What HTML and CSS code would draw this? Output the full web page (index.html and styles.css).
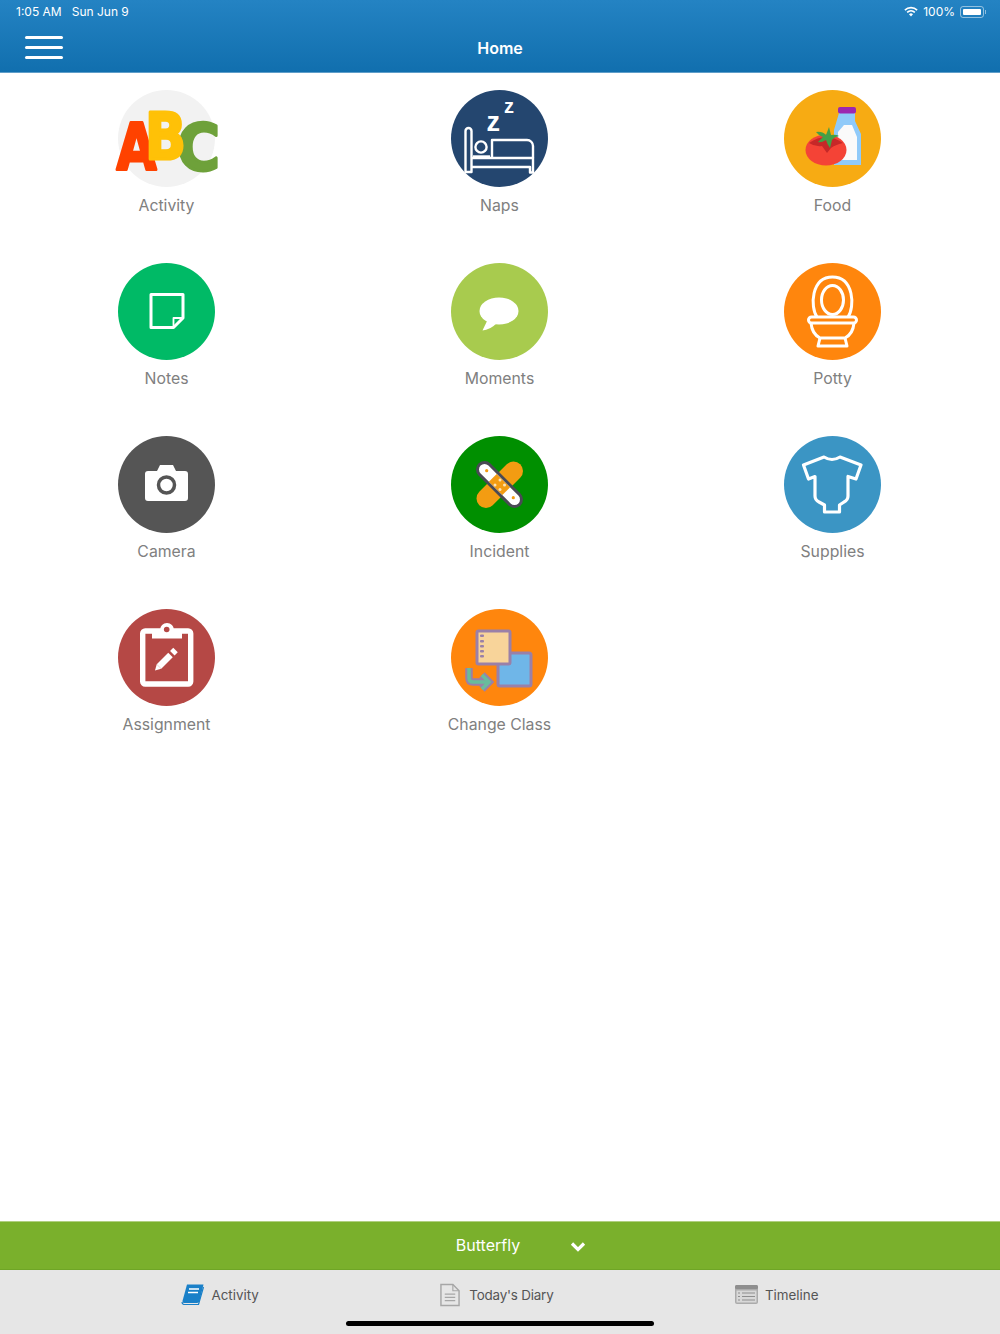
FILE: index.html
```html
<!DOCTYPE html>
<html lang="en">
<head>
    <meta charset="UTF-8">
    <meta name="viewport" content="width=device-width, initial-scale=1.0">
    <title>Home</title>
    <link rel="stylesheet" href="styles.css">
</head>
<body>
    <div class="page">
        <header class="app-header">
            <div class="status-bar">
                <span class="status-time">1:05 AM</span>
                <span class="status-date">Sun Jun 9</span>
                <div class="status-right">
                    <svg class="wifi" viewBox="0 0 16 12" width="14" height="11">
                        <path d="M1 4.4 A10 10 0 0 1 15 4.4" fill="none" stroke="#fff" stroke-width="1.8"/>
                        <path d="M3.6 7 A6.4 6.4 0 0 1 12.4 7" fill="none" stroke="#fff" stroke-width="1.8"/>
                        <path d="M8 11.6 L5.7 9.2 A3.2 3.2 0 0 1 10.3 9.2 Z" fill="#fff"/>
                    </svg>
                    <span class="status-level">100%</span>
                    <div class="battery"><div class="battery-fill"></div></div>
                    <div class="battery-nub"></div>
                </div>
            </div>
            <div class="nav-bar">
                <button class="menu-btn" aria-label="Menu"><span></span><span></span><span></span></button>
                <h1>Home</h1>
            </div>
        </header>

        <main class="menu-grid">
            <div class="menu-item">
                <svg class="icon" viewBox="0 0 97 97">
                    <circle cx="48.5" cy="48.5" r="48.5" fill="#f2f2f2"/>
                    <text class="abc" x="-1.500" y="79.500" textLength="40" lengthAdjust="spacingAndGlyphs" fill="#ff4200" stroke="#ff4200">A</text>
                    <text class="abc" x="59" y="80" textLength="43" lengthAdjust="spacingAndGlyphs" fill="#6ea13a" stroke="#6ea13a">C</text>
                    <text class="abc" x="27" y="68.500" textLength="41" lengthAdjust="spacingAndGlyphs" fill="#ffc107" stroke="#ffc107">B</text>
                </svg>
                <span class="menu-label">Activity</span>
            </div>
            <div class="menu-item">
                <svg class="icon" viewBox="0 0 97 97">
                    <circle cx="48.5" cy="48.5" r="48.5" fill="#24466f"/>
                    <g fill="none" stroke="#fff" stroke-width="2.4" stroke-linejoin="round">
                        <path d="M14.5 82 V41 A3 3 0 0 1 20.5 41 V82 Z"/>
                        <path d="M20.5 68 H82 V82.5 H79 V77 H20.5"/>
                        <path d="M41 68 V50 H76 A6 6 0 0 1 82 56 V68"/>
                        <circle cx="30" cy="57" r="5.6"/>
                        <path d="M22 66.500 H39"/>
                    </g>
                    <text class="zzz zzz-big" x="35.500" y="41">z</text>
                    <text class="zzz zzz-small" x="53" y="23">z</text>
                </svg>
                <span class="menu-label">Naps</span>
            </div>
            <div class="menu-item">
                <svg class="icon" viewBox="0 0 97 97">
                    <circle cx="48.5" cy="48.5" r="48.5" fill="#f7ab13"/>
                    <path d="M55 23 H71 V31 L77 44 V75 H50 V40 Z" fill="#90caf9"/>
                    <path d="M60 35 H68 L73 47 V70 H54 V42 Z" fill="#fafafa"/>
                    <rect x="54" y="17" width="18" height="6.500" rx="2" fill="#9c27b0"/>
                    <ellipse cx="42" cy="60" rx="20.500" ry="15.500" fill="#f44336"/>
                    <path d="M25 53 Q42 41 59 53 Q51 55 47 58 L43 63 L38 56 Q31 57 25 53 Z" fill="#c62828"/>
                    <path d="M32 42 Q38 41 42 45 L45 37 L47 45 Q52 44 55 46 Q50 47 48 50 L46 58 Q43 54 42 50 Q37 53 34 52 Q37 49 39 47 Q35 46 32 42 Z" fill="#43a047"/>
                </svg>
                <span class="menu-label">Food</span>
            </div>

            <div class="menu-item">
                <svg class="icon" viewBox="0 0 97 97">
                    <circle cx="48.5" cy="48.5" r="48.5" fill="#00ba66"/>
                    <path d="M33 31.500 H65 V55 L55.500 64.500 H33 Z" fill="none" stroke="#fff" stroke-width="3" stroke-linejoin="round"/>
                    <path d="M65 55 H55.500 V64.500" fill="none" stroke="#fff" stroke-width="1.8" stroke-linejoin="round"/>
                </svg>
                <span class="menu-label">Notes</span>
            </div>
            <div class="menu-item">
                <svg class="icon" viewBox="0 0 97 97">
                    <circle cx="48.5" cy="48.5" r="48.5" fill="#a8cb4e"/>
                    <ellipse cx="48" cy="48" rx="19.500" ry="13.500" fill="#fff"/>
                    <path d="M37 56 L31.500 67.500 Q39 67 46 60 Z" fill="#fff"/>
                </svg>
                <span class="menu-label">Moments</span>
            </div>
            <div class="menu-item">
                <svg class="icon" viewBox="0 0 97 97">
                    <circle cx="48.5" cy="48.5" r="48.5" fill="#ff860d"/>
                    <g fill="none" stroke="#fff" stroke-width="3" stroke-linejoin="round">
                        <path d="M33 54 C26 44 27 14 48.500 14 C70 14 71 44 64 54"/>
                        <ellipse cx="48.500" cy="37" rx="11" ry="14.500"/>
                        <rect x="24.500" y="54" width="48" height="6" rx="3"/>
                        <path d="M27 60 Q28 71 36 75 H61 Q69 71 70 60"/>
                        <path d="M36 75 L34 83 H63 L61 75"/>
                    </g>
                </svg>
                <span class="menu-label">Potty</span>
            </div>

            <div class="menu-item">
                <svg class="icon" viewBox="0 0 97 97">
                    <circle cx="48.5" cy="48.5" r="48.5" fill="#555"/>
                    <path d="M30 35 H39 L42 29 H55 L58 35 H67 A3 3 0 0 1 70 38 V62 A3 3 0 0 1 67 65 H30 A3 3 0 0 1 27 62 V38 A3 3 0 0 1 30 35 Z" fill="#fff"/>
                    <circle cx="48.500" cy="49" r="8" fill="none" stroke="#555" stroke-width="3.500"/>
                </svg>
                <span class="menu-label">Camera</span>
            </div>
            <div class="menu-item">
                <svg class="icon" viewBox="0 0 97 97">
                    <circle cx="48.5" cy="48.5" r="48.5" fill="#008f00"/>
                    <line x1="35" y1="62.500" x2="62.500" y2="35" stroke="#f39c12" stroke-width="19" stroke-linecap="round"/>
                    <line x1="33.500" y1="33.500" x2="63.500" y2="63.500" stroke="#4a4a55" stroke-width="17" stroke-linecap="round"/>
                    <line x1="33.500" y1="33.500" x2="63.500" y2="63.500" stroke="#fff" stroke-width="11" stroke-linecap="round"/>
                    <rect x="43" y="39" width="11" height="19" transform="rotate(-45 48.500 48.500)" fill="#f39c12"/>
                    <g fill="#fde3b5">
                        <circle cx="44" cy="49" r="1.500"/><circle cx="49" cy="44" r="1.500"/>
                        <circle cx="53.500" cy="49" r="1.500"/><circle cx="49" cy="53.500" r="1.500"/>
                    </g>
                    <circle cx="35.700" cy="34.700" r="1.600" fill="#f39c12"/>
                    <circle cx="62.300" cy="61.700" r="1.600" fill="#f39c12"/>
                </svg>
                <span class="menu-label">Incident</span>
            </div>
            <div class="menu-item">
                <svg class="icon" viewBox="0 0 97 97">
                    <circle cx="48.5" cy="48.5" r="48.5" fill="#3b95c4"/>
                    <path d="M19.500 29 L40 21 Q48 26 56 21 L77 29 L72 43 L64 40.500 V60 Q64 64 60 66 L55.500 69 V76 H40.500 V69 L35 66 Q31 64 31 60 V40.500 L24.500 43 Z" fill="none" stroke="#fff" stroke-width="3.200" stroke-linejoin="round"/>
                </svg>
                <span class="menu-label">Supplies</span>
            </div>

            <div class="menu-item">
                <svg class="icon" viewBox="0 0 97 97">
                    <circle cx="48.5" cy="48.5" r="48.5" fill="#b54845"/>
                    <rect x="24.700" y="22" width="48" height="53" rx="2.500" fill="none" stroke="#fff" stroke-width="5.400"/>
                    <path d="M34 21 H42 A7 7 0 0 1 56 21 H64 V29.500 H34 Z" fill="#fff"/>
                    <circle cx="48.700" cy="20.500" r="2.800" fill="#b54845"/>
                    <path d="M37 61.500 L38.700 55.300 L43.200 59.800 Z" fill="#fff"/>
                    <line x1="41" y1="57.500" x2="52.500" y2="46" stroke="#fff" stroke-width="6.400"/>
                    <line x1="54.300" y1="44.200" x2="57.500" y2="41" stroke="#fff" stroke-width="6.400"/>
                </svg>
                <span class="menu-label">Assignment</span>
            </div>
            <div class="menu-item">
                <svg class="icon" viewBox="0 0 97 97">
                    <circle cx="48.5" cy="48.5" r="48.5" fill="#ff860d"/>
                    <rect x="47" y="44" width="33" height="33" rx="2" fill="#6fb6e8" stroke="#9a80a8" stroke-width="3"/>
                    <rect x="26" y="22" width="33" height="33" rx="1.500" fill="#f8d49a" stroke="#9a80a8" stroke-width="3"/>
                    <g fill="#9a80a8">
                        <rect x="29" y="25.500" width="4" height="2.500" rx="1"/><rect x="29" y="31" width="4" height="2.500" rx="1"/>
                        <rect x="29" y="36" width="4" height="2.500" rx="1"/><rect x="29" y="41" width="4" height="2.500" rx="1"/>
                        <rect x="29" y="46" width="4" height="2.500" rx="1"/>
                    </g>
                    <path d="M18 59 V69 Q18 73 22 73 H36 M31 66 L38 73 L31 80" fill="none" stroke="#9a80a8" stroke-width="7.500"/>
                    <path d="M18 59 V69 Q18 73 22 73 H36 M31 66 L38 73 L31 80" fill="none" stroke="#69bc9c" stroke-width="3.500"/>
                </svg>
                <span class="menu-label">Change Class</span>
            </div>
        </main>

        <div class="class-bar">
            <span>Butterfly</span>
            <svg class="chevron" viewBox="0 0 16 11" width="16" height="11">
                <path d="M2 2.500 L8 8.500 L14 2.500" fill="none" stroke="#fff" stroke-width="3.200"/>
            </svg>
        </div>

        <nav class="tab-bar">
            <div class="tab">
                <svg viewBox="0 0 23 21" width="23" height="21">
                    <path d="M6 0.500 H22.500 L18.500 17 Q18 19 16 19 H3 Q1 19 1.500 17 Z" fill="#1a80c8"/>
                    <path d="M1 18 Q1 20.500 3.500 20.500 H17.500 L22.500 3" fill="none" stroke="#1a80c8" stroke-width="1.200"/>
                    <path d="M8 5 H18 M7 8.500 H17" stroke="#fff" stroke-width="1.300"/>
                </svg>
                <span>Activity</span>
            </div>
            <div class="tab">
                <svg viewBox="0 0 21 24" width="20" height="24">
                    <path d="M1 1 H13.500 L20 7.500 V23 H1 Z" fill="none" stroke="#a6a6a6" stroke-width="1.500"/>
                    <path d="M13.500 1 V7.500 H20" fill="none" stroke="#a6a6a6" stroke-width="1.200"/>
                    <path d="M5 11 H16 M5 14.500 H16 M5 18 H16" stroke="#a6a6a6" stroke-width="1.300"/>
                </svg>
                <span class="tab-tight">Today's Diary</span>
            </div>
            <div class="tab">
                <svg viewBox="0 0 23 19" width="23" height="19">
                    <rect x="0" y="0" width="23" height="19" rx="2" fill="#ababab"/>
                    <rect x="0" y="0" width="23" height="4" rx="1.500" fill="#8e8e8e"/>
                    <rect x="1.500" y="5.500" width="20" height="12" fill="#d8d8d8"/>
                    <path d="M3 8 H5 M7 8 H20 M3 11.500 H5 M7 11.500 H20 M3 15 H5 M7 15 H20" stroke="#8e8e8e" stroke-width="1.200"/>
                </svg>
                <span>Timeline</span>
            </div>
            <div class="home-indicator"></div>
        </nav>
    </div>
</body>
</html>
```

FILE: styles.css
```css
* {
    box-sizing: border-box;
}

body {
    margin: 0;
    font-family: Inter, 'Liberation Sans', sans-serif;
    background: white;
}

.page {
    height: 1334px;
    display: flex;
    flex-direction: column;
}

.app-header {
    height: 73px;
    background: linear-gradient(#2483c3, #116fae);
    border-bottom: 1px solid #5f9ec9;
    color: white;
}

.status-bar {
    height: 23px;
    padding: 0 14px 0 16px;
    display: flex;
    align-items: center;
    font-size: 12px;
}

.status-date {
    margin-left: 10px;
}

.status-right {
    margin-left: auto;
    display: flex;
    align-items: center;
}

.wifi {
    margin-right: 5px;
}

.battery {
    width: 24px;
    height: 12px;
    margin-left: 5px;
    padding: 2px;
    border: 1px solid rgba(255, 255, 255, 0.5);
    border-radius: 3px;
}

.battery-fill {
    height: 100%;
    background: white;
    border-radius: 1px;
}

.battery-nub {
    width: 1px;
    height: 4px;
    margin-left: 1px;
    background: rgba(255, 255, 255, 0.5);
}

.nav-bar {
    height: 49px;
    position: relative;
    display: flex;
    align-items: center;
    justify-content: center;
}

.nav-bar h1 {
    margin: 0;
    font-size: 16px;
    font-weight: 600;
}

.menu-btn {
    position: absolute;
    left: 25px;
    top: 13px;
    width: 38px;
    padding: 0;
    background: none;
    border: none;
    display: flex;
    flex-direction: column;
    gap: 7.5px;
}

.menu-btn span {
    height: 2.5px;
    background: white;
    border-radius: 2px;
}

.menu-grid {
    flex: 1;
    padding-top: 17px;
    display: grid;
    grid-template-columns: repeat(3, 333px);
    grid-auto-rows: 173px;
    align-content: start;
}

.menu-item {
    display: flex;
    flex-direction: column;
    align-items: center;
}

.icon {
    width: 97px;
    height: 97px;
    overflow: visible;
}

.menu-label {
    margin-top: 9px;
    font-size: 15.8px;
    line-height: 20px;
    color: #808080;
}

/* letters on the Activity tile */
.abc {
    font-family: 'DejaVu Sans', sans-serif;
    font-weight: 700;
    font-size: 64px;
    stroke-width: 3px;
    stroke-linejoin: round;
}

.zzz {
    font-family: 'Liberation Sans', sans-serif;
    font-weight: 700;
    fill: white;
}

.zzz-big {
    font-size: 27px;
}

.zzz-small {
    font-size: 20px;
}

.class-bar {
    height: 49px;
    padding: 0 0 2px 42px;
    background: #7ab02c;
    border-top: 1px solid #b0cf80;
    border-bottom: 1px solid #6fa526;
    display: flex;
    align-items: center;
    justify-content: center;
    gap: 50px;
    color: white;
    font-size: 16px;
}

.chevron {
    margin-top: 4px;
}

.tab-bar {
    height: 64px;
    padding-bottom: 15px;
    position: relative;
    background: #e6e6e6;
    display: flex;
    align-items: center;
    justify-content: space-evenly;
}

.tab {
    display: flex;
    align-items: center;
    gap: 7px;
    font-size: 13.4px;
    color: #555;
}

.tab-tight {
    margin-left: 2px;
    letter-spacing: -0.2px;
}

.home-indicator {
    position: absolute;
    left: 346px;
    bottom: 8px;
    width: 308px;
    height: 5px;
    background: black;
    border-radius: 3px;
}
```
